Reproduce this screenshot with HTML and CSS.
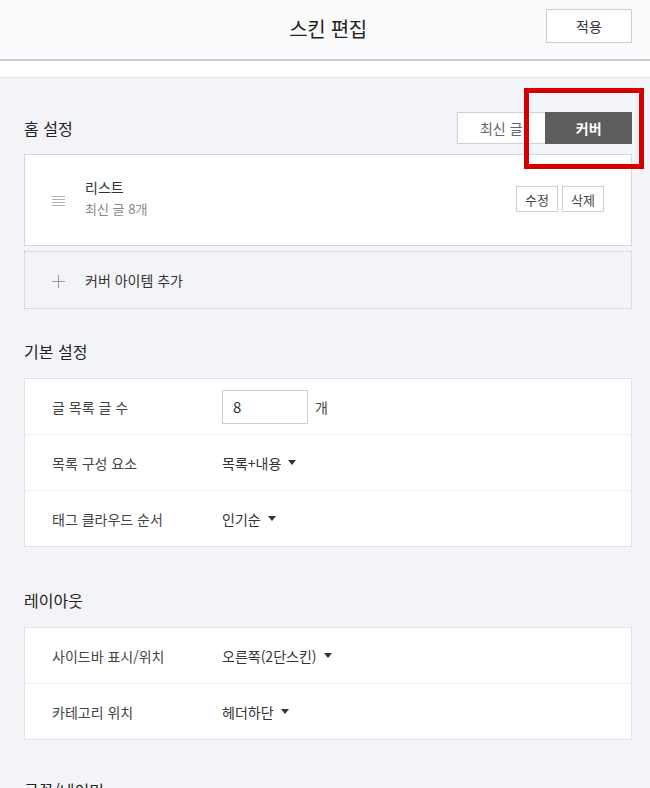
FILE: index.html
```html
<!DOCTYPE html>
<html lang="ko">
<head>
<meta charset="utf-8">
<title>스킨 편집</title>
<link rel="stylesheet" href="styles.css">
</head>
<body>
<header class="topbar">
  <div class="topbar-spacer"></div>
  <h1 class="topbar-title">스킨 편집</h1>
  <button class="btn-apply">적용</button>
</header>
<div class="strip"></div>
<main class="content">
  <section class="section section--home">
    <div class="section-head">
      <h2 class="section-title">홈 설정</h2>
      <div class="toggle">
        <span class="toggle-item">최신 글</span>
        <span class="toggle-item toggle-item--on">커버</span>
      </div>
    </div>
    <div class="cover-card">
      <span class="drag-handle" aria-hidden="true"><i></i><i></i><i></i><i></i></span>
      <div class="cover-info">
        <div class="cover-name">리스트</div>
        <div class="cover-desc">최신 글 8개</div>
      </div>
      <div class="cover-actions">
        <button class="btn-small">수정</button>
        <button class="btn-small">삭제</button>
      </div>
    </div>
    <div class="add-box">
      <span class="add-plus" aria-hidden="true"></span>
      <span class="add-label">커버 아이템 추가</span>
    </div>
  </section>

  <section class="section section--basic">
    <div class="section-head">
      <h2 class="section-title">기본 설정</h2>
    </div>
    <div class="card">
      <div class="row">
        <span class="row-label">글 목록 글 수</span>
        <div class="row-value">
          <input class="num-input" type="text" value="8">
          <span class="unit">개</span>
        </div>
      </div>
      <div class="row">
        <span class="row-label">목록 구성 요소</span>
        <div class="row-value"><span class="select">목록+내용</span></div>
      </div>
      <div class="row">
        <span class="row-label">태그 클라우드 순서</span>
        <div class="row-value"><span class="select">인기순</span></div>
      </div>
    </div>
  </section>

  <section class="section section--layout">
    <div class="section-head">
      <h2 class="section-title">레이아웃</h2>
    </div>
    <div class="card">
      <div class="row">
        <span class="row-label">사이드바 표시/위치</span>
        <div class="row-value"><span class="select">오른쪽(2단스킨)</span></div>
      </div>
      <div class="row">
        <span class="row-label">카테고리 위치</span>
        <div class="row-value"><span class="select">헤더하단</span></div>
      </div>
    </div>
  </section>

  <section class="section section--next">
    <div class="section-head">
      <h2 class="section-title">글꼴/네이밍</h2>
    </div>
  </section>
</main>
<div class="highlight" aria-hidden="true"></div>
</body>
</html>
```

FILE: styles.css
```css
* { box-sizing: border-box; }

html, body {
  margin: 0;
  padding: 0;
}

body {
  font-family: "Noto Sans CJK KR", "Noto Sans", "Liberation Sans", sans-serif;
  background: #f3f4f7;
  color: #333;
  position: relative;
  overflow: hidden;
  height: 788px;
}

button, input {
  font-family: inherit;
}

.topbar {
  height: 61px;
  background: #f9fafb;
  border-bottom: 2px solid #c7ccd3;
  display: grid;
  grid-template-columns: 1fr auto 1fr;
  align-items: center;
  padding: 0 18px 0 24px;
}

.topbar-title {
  margin: 0;
  font-size: 20px;
  font-weight: 400;
  color: #222;
  letter-spacing: -0.3px;
  margin-top: -2px;
}

.btn-apply {
  justify-self: end;
  width: 86px;
  height: 34px;
  margin-top: -7px;
  background: #fff;
  border: 1px solid #c9ced5;
  font-size: 14px;
  color: #333;
  padding: 0;
}

.strip {
  height: 17px;
  background: #fff;
  border-bottom: 1px solid #e1e4e9;
}

.content {
  padding: 34px 18px 0 24px;
}

.section-head {
  display: flex;
  align-items: center;
  justify-content: space-between;
  height: 32px;
  margin-bottom: 11px;
}

.section--home .section-head {
  margin-bottom: 10px;
}

.section-title {
  margin: 0;
  font-size: 16px;
  font-weight: 400;
  color: #222;
  line-height: 32px;
}

.section--basic { margin-top: 26px; }
.section--layout { margin-top: 37px; }
.section--next { margin-top: 34px; }

.toggle {
  display: flex;
  width: 175px;
  height: 32px;
}

.toggle-item {
  flex: 1;
  display: flex;
  align-items: center;
  justify-content: center;
  font-size: 14px;
  color: #666;
  background: #fff;
  border: 1px solid #cdd1d7;
  border-right: none;
}

.toggle-item--on {
  background: #5e5e5e;
  border-color: #5e5e5e;
  color: #fff;
  font-weight: 700;
}

.cover-card {
  height: 92px;
  background: #fff;
  border: 1px solid #d5d9df;
  display: flex;
  align-items: center;
  padding: 0 27px 0 27px;
}

.drag-handle {
  width: 13px;
  display: flex;
  flex-direction: column;
  gap: 2px;
  margin-top: 2px;
}

.drag-handle i {
  display: block;
  height: 1px;
  background: #b0b0b0;
}

.cover-info {
  margin-left: 20px;
  flex: 1;
  margin-top: -5px;
}

.cover-name {
  font-size: 14px;
  color: #333;
  line-height: 22px;
}

.cover-desc {
  font-size: 13px;
  color: #888;
  line-height: 22px;
}

.cover-actions {
  display: flex;
  gap: 4px;
  margin-top: -2px;
}

.btn-small {
  width: 42px;
  height: 26px;
  padding: 0;
  background: #fff;
  border: 1px solid #ccd0d6;
  font-size: 13px;
  color: #444;
}

.add-box {
  margin-top: 5px;
  height: 58px;
  border: 1px dotted #c4c8ce;
  display: flex;
  align-items: center;
  padding: 0 27px;
}

.add-plus {
  position: relative;
  width: 13px;
  height: 13px;
  margin-top: 2px;
}

.add-plus::before,
.add-plus::after {
  content: "";
  position: absolute;
  background: #999;
}

.add-plus::before {
  left: 0;
  right: 0;
  top: 6px;
  height: 1px;
}

.add-plus::after {
  top: 0;
  bottom: 0;
  left: 6px;
  width: 1px;
}

.add-label {
  margin-left: 20px;
  font-size: 14px;
  color: #333;
}

.card {
  background: #fff;
  border: 1px solid #dfe2e7;
}

.row {
  height: 56px;
  display: flex;
  align-items: center;
  padding-left: 27px;
  border-top: 1px solid #eceef1;
}

.row:first-child {
  height: 55px;
  border-top: none;
}

.row-label {
  width: 170px;
  font-size: 14px;
  color: #444;
}

.row-value {
  display: flex;
  align-items: center;
  font-size: 14px;
  color: #333;
}

.num-input {
  width: 86px;
  height: 34px;
  border: 1px solid #c9ced6;
  padding: 0 10px;
  font-size: 15px;
  color: #333;
  background: #fff;
  outline: none;
}

.unit {
  margin-left: 7px;
  font-size: 14px;
  color: #444;
}

.select {
  display: inline-flex;
  align-items: center;
}

.select::after {
  content: "";
  margin-left: 7px;
  border-left: 4px solid transparent;
  border-right: 4px solid transparent;
  border-top: 5px solid #333;
}

.highlight {
  position: absolute;
  left: 524px;
  top: 88px;
  width: 120px;
  height: 81px;
  border: 5px solid #d40000;
  pointer-events: none;
}
```
